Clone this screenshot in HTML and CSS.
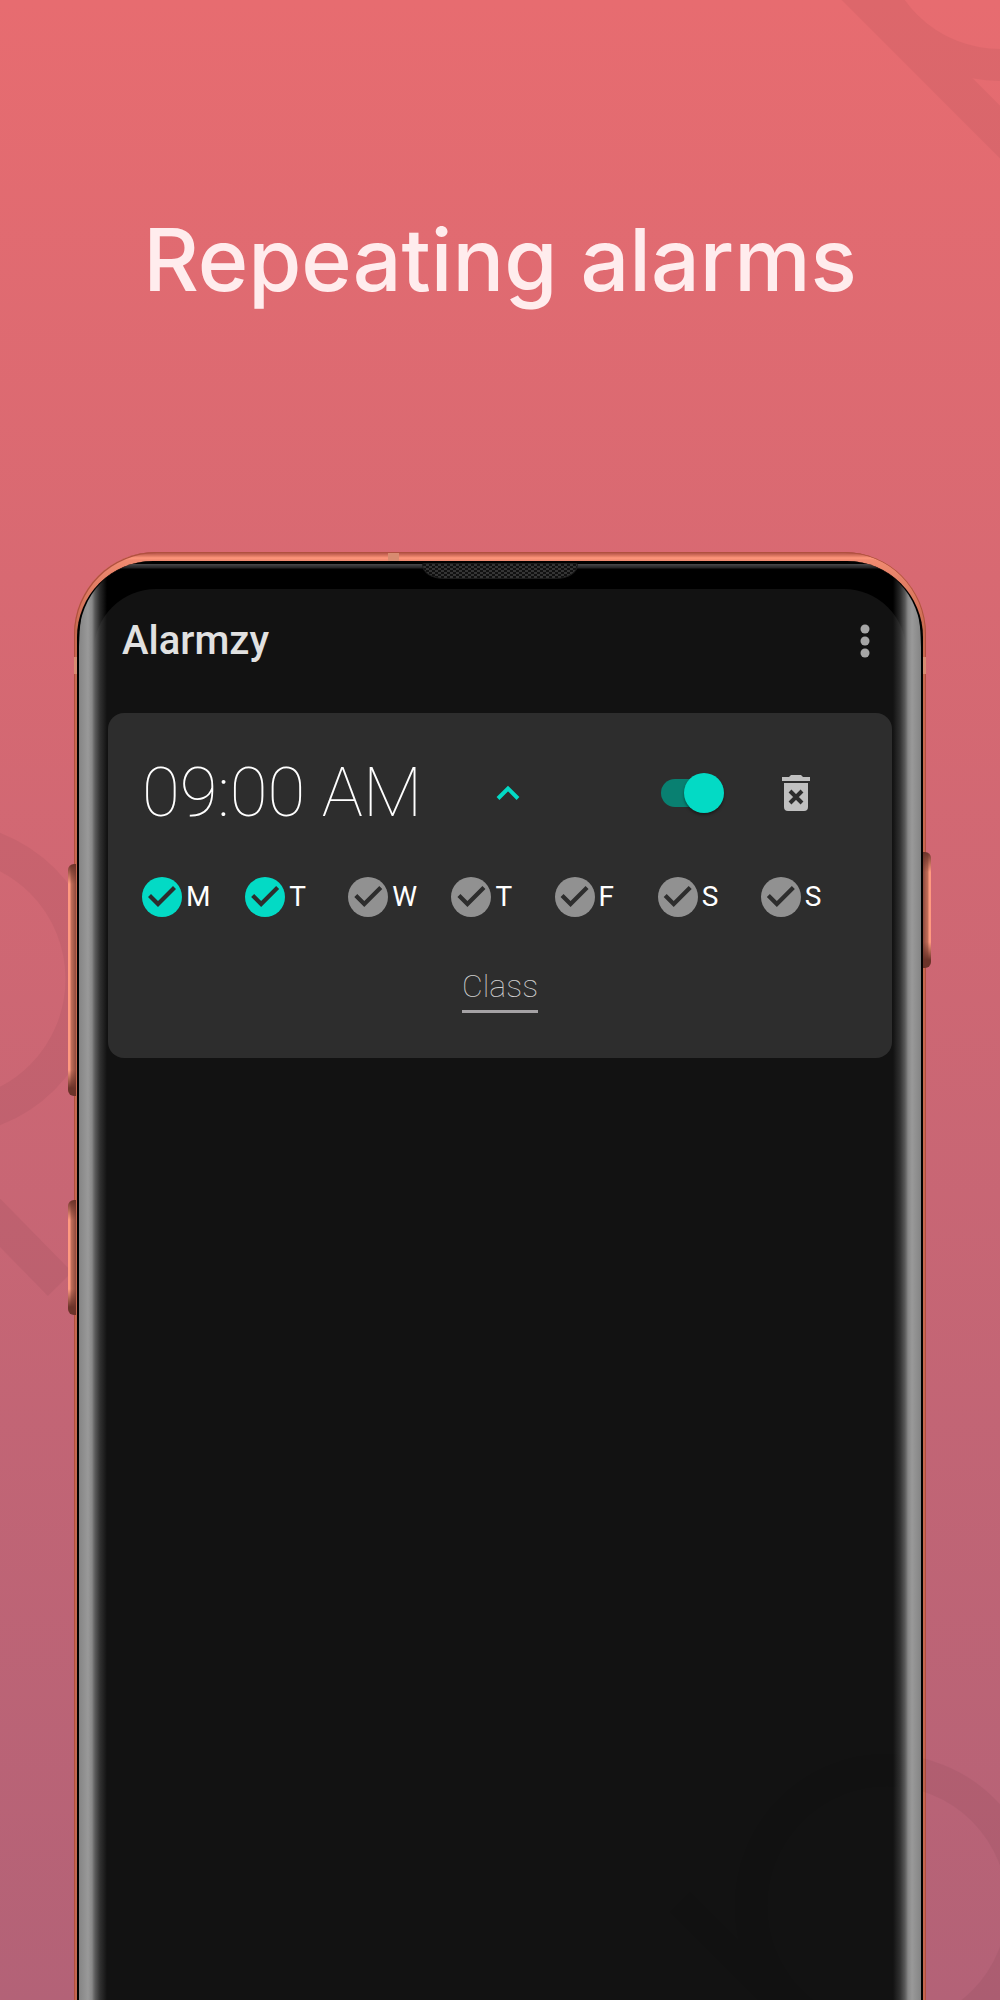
FILE: index.html
```html
<!DOCTYPE html>
<html lang="en">
<head>
  <meta charset="utf-8">
  <meta name="viewport" content="width=device-width, initial-scale=1">
  <title>Alarmzy – Repeating alarms</title>
  <link rel="stylesheet" href="styles.css">
</head>
<body>
  <main class="poster">
    <h1 class="headline">Repeating alarms</h1>

    <svg class="motif motif-top" viewBox="0 0 200 200" aria-hidden="true">
      <g fill="none" stroke="#000">
        <circle cx="200" cy="-68" r="133" stroke-width="32"/>
        <path d="M38-30 238 170" stroke-width="37"/>
      </g>
    </svg>
    <svg class="motif motif-left" viewBox="0 0 120 500" aria-hidden="true">
      <g fill="none" stroke="#000">
        <circle cx="-56" cy="179" r="139" stroke-width="35"/>
        <path d="M-40 382 60 484" stroke-width="34"/>
      </g>
    </svg>

    <section class="phone" aria-label="Alarmzy app">
      <span class="side-key key-volume"></span>
      <span class="side-key key-assist"></span>
      <span class="side-key key-power"></span>
      <span class="antenna antenna-top"></span>
      <span class="antenna antenna-left"></span>
      <span class="antenna antenna-right"></span>

      <div class="glass">
        <span class="speaker"></span>
        <div class="screen">
          <header class="app-bar">
            <h2 class="app-name">Alarmzy</h2>
            <button class="icon-button" type="button" aria-label="More options">
              <svg width="10" height="34" viewBox="0 0 10 34" fill="#a6a6a6" aria-hidden="true">
                <circle cx="5" cy="5" r="4.500"/><circle cx="5" cy="17" r="4.500"/><circle cx="5" cy="29" r="4.500"/>
              </svg>
            </button>
          </header>

          <article class="alarm">
            <div class="alarm-top">
              <time class="alarm-time" datetime="09:00">09:00 AM</time>
              <button class="icon-button collapse" type="button" aria-label="Collapse">
                <svg width="24" height="16" viewBox="0 0 24 16" fill="none" stroke="#03dac5" stroke-width="4" aria-hidden="true">
                  <path d="M2 13.500 12 3.500 22 13.500"/>
                </svg>
              </button>
              <input class="switch" type="checkbox" role="switch" aria-label="Alarm on" checked>
              <button class="icon-button" type="button" aria-label="Delete alarm">
                <svg width="28" height="36" viewBox="0 0 28 36" aria-hidden="true">
                  <path fill="#c0c0c0" d="M0 2h7l2-2h10l2 2h7v4H0zM2 8h24v24a4 4 0 0 1-4 4H6a4 4 0 0 1-4-4z"/>
                  <path fill="none" stroke="#2d2d2d" stroke-width="4" d="m8 16 12 12M20 16 8 28"/>
                </svg>
              </button>
            </div>

            <div class="days">
              <label class="day"><input type="checkbox" checked>M</label>
              <label class="day"><input type="checkbox" checked>T</label>
              <label class="day"><input type="checkbox">W</label>
              <label class="day"><input type="checkbox">T</label>
              <label class="day"><input type="checkbox">F</label>
              <label class="day"><input type="checkbox">S</label>
              <label class="day"><input type="checkbox">S</label>
            </div>

            <input class="alarm-label" type="text" value="Class" aria-label="Alarm label">
          </article>
        </div>
      </div>
    </section>

    <svg class="motif motif-bottom" viewBox="0 0 360 300" aria-hidden="true">
      <g fill="none" stroke="#000">
        <circle cx="247" cy="206" r="136" stroke-width="32"/>
        <path d="M40 202 180 342" stroke-width="28"/>
        <path d="M370 262 320 322" stroke-width="20"/>
      </g>
    </svg>
  </main>
</body>
</html>
```

FILE: styles.css
```css
* {
  box-sizing: border-box;
}

body {
  margin: 0;
  font-family: Roboto, "Liberation Sans", sans-serif;
}

.poster {
  position: relative;
  display: flex;
  flex-direction: column;
  min-height: 100vh;
  overflow: hidden;
  background: linear-gradient(#e76c70, #b36277);
}

.headline {
  margin: 0;
  padding: 204px 24px 236px;
  color: #ffeced;
  font: 500 86px/112px Inter, "Open Sans", sans-serif;
  text-align: center;
}

/* Faint ring-and-bar shapes in the corners */
.motif {
  position: absolute;
  opacity: 0.04;
  pointer-events: none;
}

.motif-top {
  top: 0;
  right: 0;
  width: 200px;
}

.motif-left {
  top: 800px;
  left: 0;
  width: 120px;
}

.motif-bottom {
  right: 0;
  bottom: 0;
  width: 360px;
}

/* Phone body */
.phone {
  position: relative;
  flex: 1;
  display: flex;
  margin: 0 74px;
  padding: 9px 3px 0;
  border-radius: 82px 82px 0 0;
  background: linear-gradient(#a8483f, #e07a64 4px, #ff977c 6px, #f08a70 8px, #c8694f 80px, #c4664f);
  box-shadow: inset 1px 1px #b0503f, inset -1px 0 #b0503f;
}

.side-key {
  position: absolute;
  width: 8px;
  border-radius: 6px 0 0 6px;
  background:
    linear-gradient(#6b3329, transparent 20px, transparent calc(100% - 26px), #6b3329 calc(100% - 8px)),
    linear-gradient(90deg, #ff9a80 2px, #c4705c 3px, #8e4a3c);
}

.key-volume {
  top: 312px;
  left: -6px;
  height: 232px;
}

.key-assist {
  top: 648px;
  left: -6px;
  height: 115px;
}

.key-power {
  top: 300px;
  right: -5px;
  height: 116px;
  transform: scaleX(-1);
}

.antenna {
  position: absolute;
  background: #d88b70;
}

.antenna-top {
  top: 1px;
  left: 314px;
  width: 11px;
  height: 8px;
}

.antenna-left,
.antenna-right {
  top: 105px;
  width: 3px;
  height: 17px;
}

.antenna-left {
  left: 0;
}

.antenna-right {
  right: 0;
}

.glass {
  position: relative;
  flex: 1;
  display: flex;
  padding: 28px 15px 0;
  overflow: hidden;
  border: solid #000;
  border-width: 0 2px;
  border-radius: 76px 76px 0 0;
  background: linear-gradient(#000 3px, #48484a 3px, #202022 7px, #000 8px);
}

/* Curved glass edges catching the light */
.glass::before,
.glass::after {
  content: "";
  position: absolute;
  z-index: 1;
  top: 6px;
  bottom: 0;
  width: 28px;
  background: linear-gradient(90deg, #858585, #999 9px, #888 13px, rgba(110, 110, 110, 0.8) 16px, rgba(80, 80, 80, 0.5) 21px, transparent 28px);
  pointer-events: none;
}

.glass::before {
  left: 0;
  border-top-left-radius: 100% 80px;
}

.glass::after {
  right: 0;
  border-top-left-radius: 100% 80px;
  transform: scaleX(-1);
}

.speaker {
  position: absolute;
  top: 2px;
  left: 50%;
  width: 156px;
  height: 16px;
  margin-left: -78px;
  border: 1px solid #1c1c1c;
  border-radius: 2px 2px 22px 22px / 2px 2px 14px 14px;
  background: repeating-conic-gradient(#343434 0 25%, #101010 0 50%) 0 0 / 6px 4px;
}

.screen {
  flex: 1;
  min-width: 0;
  padding: 0 14px;
  border-radius: 62px 62px 0 0;
  background: #121212;
}

.app-bar {
  display: flex;
  align-items: center;
  justify-content: space-between;
  height: 124px;
  padding: 0 22px 20px 14px;
}

.app-name {
  margin: 0;
  color: #e1e1e1;
  font-size: 40px;
  font-weight: 500;
  line-height: 48px;
}

.icon-button {
  display: flex;
  padding: 0;
  border: 0;
  background: none;
  cursor: pointer;
}

/* Alarm card */
.alarm {
  display: flex;
  flex-direction: column;
  padding: 39px 34px 45px;
  border-radius: 16px;
  background: #2d2d2d;
}

.alarm-top {
  display: flex;
  align-items: center;
  height: 82px;
  padding-right: 48px;
}

.alarm-time {
  width: 354px;
  color: #fff;
  font-size: 69px;
  font-weight: 100;
  line-height: 82px;
}

.switch {
  position: relative;
  width: 63px;
  height: 40px;
  margin: 0 58px 0 auto;
  appearance: none;
  cursor: pointer;
}

.switch::before {
  content: "";
  position: absolute;
  inset: 6px 5px 6px 0;
  border-radius: 14px;
  background: #098071;
}

.switch::after {
  content: "";
  position: absolute;
  top: 0;
  right: 0;
  width: 40px;
  height: 40px;
  border-radius: 50%;
  background: #03dac5;
  box-shadow: 0 2px 3px rgba(0, 0, 0, 0.4);
}

.days {
  display: grid;
  grid-template-columns: repeat(7, 1fr);
  margin: 42px -6px 0 0;
}

.day {
  display: flex;
  align-items: center;
  gap: 4px;
  color: #fff;
  font-size: 28px;
  line-height: 42px;
}

.day input {
  width: 40px;
  height: 40px;
  margin: 0;
  border-radius: 50%;
  appearance: none;
  background: #919191;
  cursor: pointer;
}

.day input:checked {
  background: #03dac5;
}

.day input::before {
  content: "";
  display: block;
  width: 40px;
  height: 40px;
  background: #2d2d2d;
  clip-path: polygon(6px 20px, 9px 17px, 16px 24px, 31px 9px, 34px 12px, 16px 30px);
}

.alarm-label {
  align-self: center;
  width: 76px;
  height: 50px;
  margin: 45px 0 0;
  padding: 0 0 2px;
  border: 0;
  border-bottom: 3px solid #a5a2a5;
  background: none;
  color: #d0d0d0;
  font: 100 32px/40px Roboto, "Liberation Sans", sans-serif;
  text-align: center;
}
```
